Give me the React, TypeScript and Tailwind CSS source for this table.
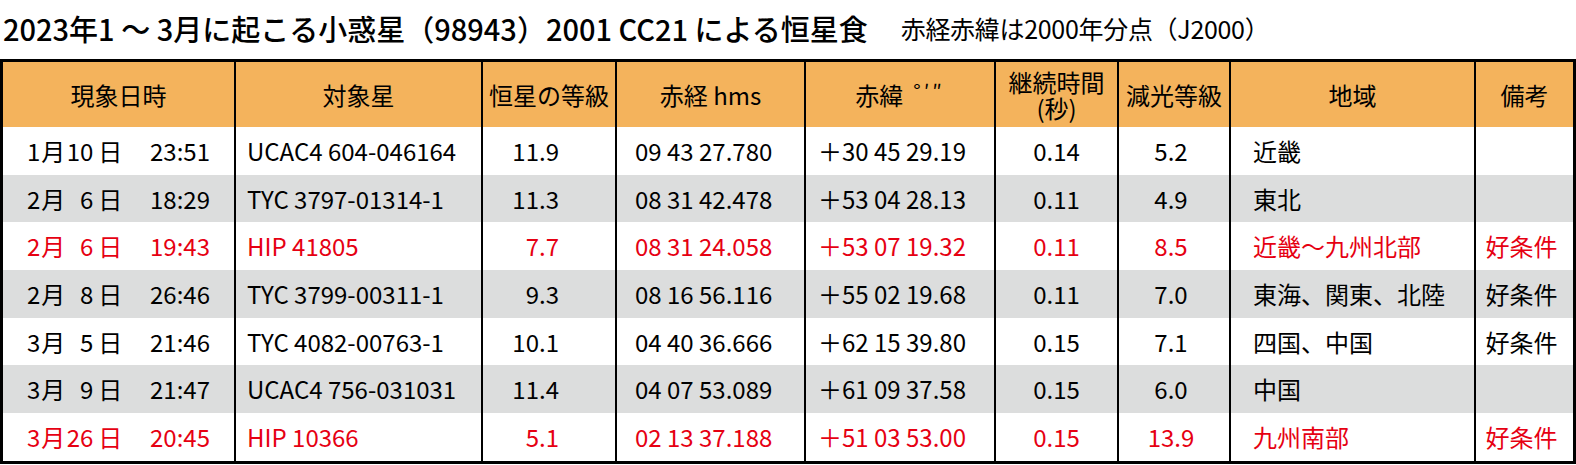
const rows = [
  { m: "1", d: "10", t: "23:51", star: "UCAC4 604-046164", mag: "11.9", ra: "09 43 27.780", dec: "＋30 45 29.19", dur: "0.14", drop: "5.2", area: "近畿", note: "", red: false },
  { m: "2", d: "6", t: "18:29", star: "TYC 3797-01314-1", mag: "11.3", ra: "08 31 42.478", dec: "＋53 04 28.13", dur: "0.11", drop: "4.9", area: "東北", note: "", red: false },
  { m: "2", d: "6", t: "19:43", star: "HIP 41805", mag: "7.7", ra: "08 31 24.058", dec: "＋53 07 19.32", dur: "0.11", drop: "8.5", area: "近畿～九州北部", note: "好条件", red: true },
  { m: "2", d: "8", t: "26:46", star: "TYC 3799-00311-1", mag: "9.3", ra: "08 16 56.116", dec: "＋55 02 19.68", dur: "0.11", drop: "7.0", area: "東海、関東、北陸", note: "好条件", red: false },
  { m: "3", d: "5", t: "21:46", star: "TYC 4082-00763-1", mag: "10.1", ra: "04 40 36.666", dec: "＋62 15 39.80", dur: "0.15", drop: "7.1", area: "四国、中国", note: "好条件", red: false },
  { m: "3", d: "9", t: "21:47", star: "UCAC4 756-031031", mag: "11.4", ra: "04 07 53.089", dec: "＋61 09 37.58", dur: "0.15", drop: "6.0", area: "中国", note: "", red: false },
  { m: "3", d: "26", t: "20:45", star: "HIP 10366", mag: "5.1", ra: "02 13 37.188", dec: "＋51 03 53.00", dur: "0.15", drop: "13.9", area: "九州南部", note: "好条件", red: true },
];

const cols = "grid grid-cols-[231px_247px_134px_189px_190px_123px_112px_245px_99px]";
const cell = "border-l-2 border-black flex items-center";

export default function App() {
  return (
    <div className="w-[1576px] h-[465px] bg-white text-black font-['Noto_Sans_CJK_JP',sans-serif] overflow-hidden">
      {/* title */}
      <div className="h-[59px] flex items-center pb-[2px] pl-[3px] whitespace-nowrap">
        <span className="text-[29px] font-[450]">
          2023年1 ～ 3月に起こる小惑星（98943）2001 CC21 による恒星食
        </span>
        <span className="text-[25px] ml-[33px] tracking-[-0.3px]">赤経赤緯は2000年分点（J2000）</span>
      </div>

      {/* table */}
      <div className="border-[3px] border-black w-[1576px]">
        <div className={`${cols} h-[65px] bg-[#f4b35c] text-[24px]`}>
          <div className="flex items-center justify-center">現象日時</div>
          <div className={`${cell} justify-center`}>対象星</div>
          <div className={`${cell} justify-center`}>恒星の等級</div>
          <div className={`${cell} justify-center`}>赤経 hms</div>
          <div className={`${cell} justify-center`}>
            赤緯
            <span className="ml-[10px] text-[20px] tracking-[3px] self-start mt-[14px]">°′″</span>
          </div>
          <div className={`${cell} flex-col justify-center leading-[26px]`}>
            <span>継続時間</span>
            <span>(秒)</span>
          </div>
          <div className={`${cell} justify-center`}>減光等級</div>
          <div className={`${cell} justify-center`}>地域</div>
          <div className={`${cell} justify-center`}>備考</div>
        </div>

        {rows.map((r, i) => (
          <div
            key={i}
            className={`${cols} h-[47.7px] text-[24px] ${i % 2 === 1 ? "bg-[#dcdddd]" : "bg-white"} ${r.red ? "text-[#e60012]" : "text-black"}`}
          >
            <div className="flex items-center pl-[24px]">
              <span className="inline-flex w-[123px]">
                <span>{r.m}</span>
                <span className="ml-[1px]">月</span>
                <span className="inline-block w-[28px] text-right">{r.d}</span>
                <span className="ml-[5px]">日</span>
              </span>
              <span>{r.t}</span>
            </div>
            <div className={`${cell} pl-[11px]`}>{r.star}</div>
            <div className={`${cell} justify-end pr-[56px]`}>{r.mag}</div>
            <div className={`${cell} pl-[18px]`}>{r.ra}</div>
            <div className={`${cell} pl-[12px]`}>{r.dec}</div>
            <div className={`${cell} justify-center`}>{r.dur}</div>
            <div className={`${cell} justify-center pr-[6px]`}>{r.drop}</div>
            <div className={`${cell} pl-[22px]`}>{r.area}</div>
            <div className={`${cell} justify-center pr-[6px]`}>{r.note}</div>
          </div>
        ))}
      </div>
    </div>
  );
}
